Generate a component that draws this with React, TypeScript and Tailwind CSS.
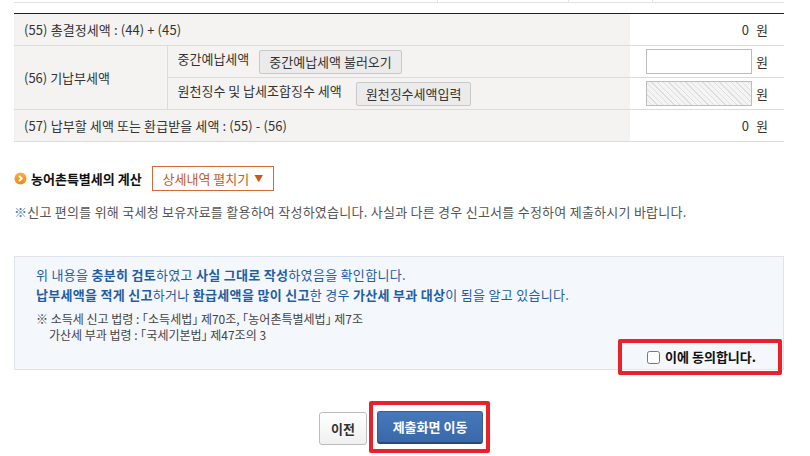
import React, { useState } from "react";

const font = "font-['Malgun_Gothic','Noto_Sans_CJK_KR','Noto_Sans',sans-serif]";

const Won = ({ value }: { value: string }) => (
  <div className="flex items-center justify-end pr-[16px]">
    <span>{value}</span>
    <span className="ml-[7px]">원</span>
  </div>
);

const GrayButton = ({ children }: { children: React.ReactNode }) => (
  <button className="h-[24px] px-[9px] rounded-[2px] border border-[#c9c9c9] bg-[#ebebeb] text-[13px] text-[#333] leading-none">
    {children}
  </button>
);

const App = () => {
  const [agree, setAgree] = useState(false);

  return (
    <div className={`w-[810px] h-[456px] bg-white overflow-hidden ${font}`}>
      {/* previous row remnant */}
      <div className="ml-[14px] w-[770px] flex h-[3px] border-b border-[#e3e3e3]">
        <div className="w-[423px]" />
        <div className="w-[131px] border-l border-[#e3e3e3]" />
        <div className="w-[84px] border-l border-[#e3e3e3]" />
        <div className="flex-1 border-l border-[#e3e3e3]" />
      </div>

      <table className="ml-[14px] mt-[10px] w-[770px] border-collapse border-t border-[#222] text-[13px] text-[#333]">
        <tbody>
          <tr className="h-[32px] border-b border-[#dcdcdc]">
            <td colSpan={2} className="bg-[#f4f3f2] pl-[10px] tracking-[0.1px]">
              (55) 총결정세액 : (44) + (45)
            </td>
            <td className="w-[154px]">
              <Won value="0" />
            </td>
          </tr>
          <tr className="h-[32px] border-b border-[#dcdcdc]">
            <td rowSpan={2} className="w-[153px] bg-[#f4f3f2] pl-[10px] border-r border-[#dcdcdc] border-b">
              (56) 기납부세액
            </td>
            <td className="bg-[#f4f3f2] pl-[10px]">
              <div className="flex items-center gap-[10px]">
                <span className="-mt-[6px]">중간예납세액</span>
                <GrayButton>중간예납세액 불러오기</GrayButton>
              </div>
            </td>
            <td>
              <div className="flex items-center justify-end pr-[16px]">
                <input className="w-[106px] h-[25px] border border-[#bdbdbd] bg-white outline-none" />
                <span className="ml-[4px]">원</span>
              </div>
            </td>
          </tr>
          <tr className="h-[32px] border-b border-[#dcdcdc]">
            <td className="bg-[#f4f3f2] pl-[10px]">
              <div className="flex items-center gap-[14px]">
                <span className="-mt-[6px]">원천징수 및 납세조합징수 세액</span>
                <GrayButton>원천징수세액입력</GrayButton>
              </div>
            </td>
            <td>
              <div className="flex items-center justify-end pr-[16px]">
                <input
                  disabled
                  className="w-[106px] h-[25px] border border-[#bdbdbd] bg-[repeating-linear-gradient(45deg,#f4f4f4_0px,#f4f4f4_3px,#dedede_3px,#dedede_4px)]"
                />
                <span className="ml-[4px]">원</span>
              </div>
            </td>
          </tr>
          <tr className="h-[32px] border-b border-[#dcdcdc]">
            <td colSpan={2} className="bg-[#f4f3f2] pl-[10px] tracking-[0.1px]">
              (57) 납부할 세액 또는 환급받을 세액 : (55) - (56)
            </td>
            <td>
              <Won value="0" />
            </td>
          </tr>
        </tbody>
      </table>

      {/* 농어촌특별세 */}
      <div className="ml-[14px] mt-[24px] flex items-center">
        <svg width="13" height="13" viewBox="0 0 13 13">
          <defs>
            <linearGradient id="og" x1="0" y1="0" x2="0" y2="1">
              <stop offset="0" stopColor="#f7b03c" />
              <stop offset="1" stopColor="#ec8a12" />
            </linearGradient>
          </defs>
          <circle cx="6.5" cy="6.5" r="6" fill="url(#og)" />
          <path d="M5 3.8 L7.8 6.5 L5 9.2" fill="none" stroke="#fff" strokeWidth="1.8" />
        </svg>
        <span className="ml-[4px] text-[13px] font-bold text-[#111]">농어촌특별세의 계산</span>
        <button className="ml-[10px] h-[25px] px-[10px] border border-[#cf6b33] bg-white text-[13px] text-[#c8581c] flex items-center gap-[5px]">
          상세내역 펼치기 <span className="text-[9px]">▼</span>
        </button>
      </div>

      <p className="ml-[14px] mt-[11px] text-[13px] leading-[20px] tracking-[0.25px] text-[#555]">
        <span className="text-[#3f7bc4]">※</span>신고 편의를 위해 국세청 보유자료를 활용하여 작성하였습니다. 사실과 다른 경우 신고서를 수정하여 제출하시기 바랍니다.
      </p>

      {/* 확인 박스 */}
      <div className="ml-[14px] mt-[34px] w-[770px] h-[114px] flex flex-col border border-[#dfe4ec] bg-[#f4f7fc] px-[21px] pt-[8px]">
        <p className="text-[13px] leading-[20px] tracking-[0.3px] text-[#1f5ea6]">
          위 내용을 <b>충분히 검토</b>하였고 <b>사실 그대로 작성</b>하였음을 확인합니다.
        </p>
        <p className="text-[13px] leading-[20px] tracking-[0.3px] text-[#1f5ea6]">
          <b>납부세액을 적게 신고</b>하거나 <b>환급세액을 많이 신고</b>한 경우 <b>가산세 부과 대상</b>이 됨을 알고 있습니다.
        </p>
        <div className="mt-[6px] text-[12px] leading-[16px] text-[#444] [font-feature-settings:'halt']">
          <p>※ 소득세 신고 법령 : 「소득세법」 제70조, 「농어촌특별세법」 제7조</p>
          <p className="pl-[13px]">가산세 부과 법령 : 「국세기본법」 제47조의 3</p>
        </div>
        <div className="mt-auto mb-[3px] flex justify-end pr-[6px]">
          <label className="relative flex h-[18px] items-center gap-[5px] text-[13px] font-bold text-[#111]">
            <input
              type="checkbox"
              checked={agree}
              onChange={(e) => setAgree(e.target.checked)}
              className="w-[13px] h-[13px] m-0"
            />
            이에 동의합니다.
            <span className="pointer-events-none absolute left-[-29px] right-[-26px] top-[-9px] bottom-[-9px] rounded-[2px] border-[4px] border-[#e8212b]" />
          </label>
        </div>
      </div>

      {/* 하단 버튼 */}
      <div className="mt-[42px] flex items-start justify-center gap-[10px] pr-[8px]">
        <button className="h-[33px] w-[48px] rounded-[3px] border border-[#bcbcbc] bg-gradient-to-b from-white to-[#f0f0f0] text-[13px] font-bold text-[#333]">
          이전
        </button>
        <div className="relative -mt-[1px]">
          <button className="h-[33px] w-[106px] rounded-[3px] border border-[#345f9c] border-b-[2px] border-b-[#27497a] bg-gradient-to-b from-[#4678ba] to-[#3a69a9] text-[13px] font-bold text-white">
            제출화면 이동
          </button>
          <span className="pointer-events-none absolute left-[-8px] right-[-7px] top-[-10px] bottom-[-9px] rounded-[2px] border-[4px] border-[#e8212b]" />
        </div>
      </div>
    </div>
  );
};

export default App;
